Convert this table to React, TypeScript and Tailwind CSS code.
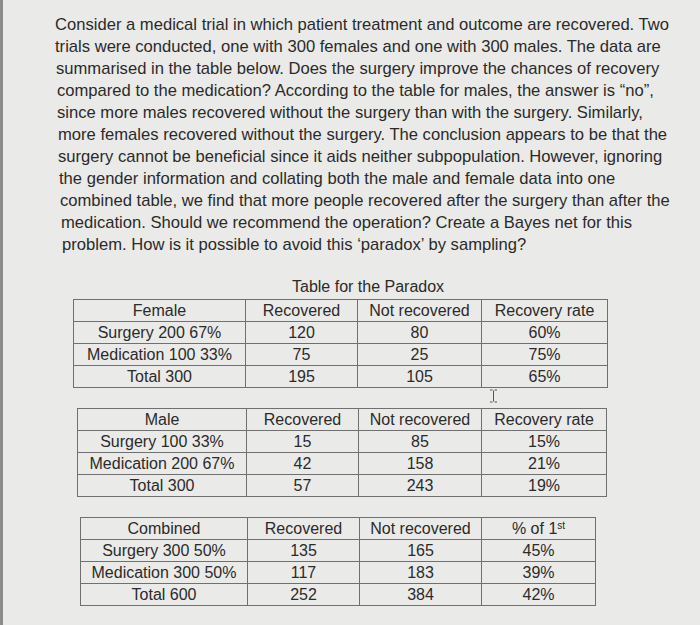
import React from 'react';

const lines = [
  'Consider a medical trial in which patient treatment and outcome are recovered. Two',
  'trials were conducted, one with 300 females and one with 300 males. The data are',
  'summarised in the table below. Does the surgery improve the chances of recovery',
  'compared to the medication? According to the table for males, the answer is \u201cno\u201d,',
  'since more males recovered without the surgery than with the surgery. Similarly,',
  'more females recovered without the surgery. The conclusion appears to be that the',
  'surgery cannot be beneficial since it aids neither subpopulation. However, ignoring',
  'the gender information and collating both the male and female data into one',
  'combined table, we find that more people recovered after the surgery than after the',
  'medication. Should we recommend the operation? Create a Bayes net for this',
  'problem. How is it possible to avoid this \u2018paradox\u2019 by sampling?',
];

// small left shifts to follow the slight tilt of the photo
const indents = ['pl-0', 'pl-0', 'pl-px', 'pl-[2px]', 'pl-[2px]', 'pl-[3px]', 'pl-[3px]', 'pl-[4px]', 'pl-[5px]', 'pl-[6px]', 'pl-[7px]'];

type Row = [string, string, string, React.ReactNode];

const Table: React.FC<{ rows: Row[]; className: string; cols: string[] }> = ({ rows, className, cols }) => (
  <table className={`table-fixed border-collapse text-[16px] leading-[21px] text-[#2b2b2b] ${className}`}>
    <colgroup>
      {cols.map((c, i) => (
        <col key={i} className={c} />
      ))}
    </colgroup>
    <tbody>
      {rows.map((r, i) => (
        <tr key={i} className="h-[21.5px]">
          {r.map((cell, j) => (
            <td key={j} className="border border-[#707070] p-0 text-center">{cell}</td>
          ))}
        </tr>
      ))}
    </tbody>
  </table>
);

export default function App() {
  return (
    <div className="relative h-[625px] w-[700px] overflow-hidden bg-[#eaeae8] font-['Liberation_Sans',Arial,sans-serif]">
      <div className="absolute left-0 top-0 h-full w-[3px] bg-[#8c8c8c]" />
      <div className="pl-[55px] pt-[14px] text-[16.6px] leading-[22px] text-[#2a2a2a]">
        {lines.map((l, i) => (
          <div key={i} className={`whitespace-nowrap ${indents[i]}`}>{l}</div>
        ))}
      </div>

      <div className="ml-[292px] mt-[21px] text-[16px] leading-[20px] text-[#2b2b2b]">Table for the Paradox</div>

      <Table
        className="ml-[73px] mt-[2px] w-[534px]"
        cols={['w-[172px]', 'w-[112px]', 'w-[124px]', 'w-[126px]']}
        rows={[
          ['Female', 'Recovered', 'Not recovered', 'Recovery rate'],
          ['Surgery 200 67%', '120', '80', '60%'],
          ['Medication 100 33%', '75', '25', '75%'],
          ['Total 300', '195', '105', '65%'],
        ]}
      />

      <Table
        className="ml-[77px] mt-[20px] w-[529px]"
        cols={['w-[169px]', 'w-[112px]', 'w-[123px]', 'w-[125px]']}
        rows={[
          ['Male', 'Recovered', 'Not recovered', 'Recovery rate'],
          ['Surgery 100 33%', '15', '85', '15%'],
          ['Medication 200 67%', '42', '158', '21%'],
          ['Total 300', '57', '243', '19%'],
        ]}
      />

      <Table
        className="ml-[80px] mt-[20px] w-[515px]"
        cols={['w-[167px]', 'w-[112px]', 'w-[122px]', 'w-[114px]']}
        rows={[
          ['Combined', 'Recovered', 'Not recovered', <span key="s">% of 1<sup className="text-[10px]">st</sup></span>],
          ['Surgery 300 50%', '135', '165', '45%'],
          ['Medication 300 50%', '117', '183', '39%'],
          ['Total 600', '252', '384', '42%'],
        ]}
      />

      {/* text cursor left in the photo */}
      <svg className="absolute left-[489px] top-[389px]" width="9" height="14" viewBox="0 0 9 14">
        <path d="M1 1h2.5M5.5 1H8M4.5 1.5v11M1 13h2.5M5.5 13H8" stroke="#555" strokeWidth="1" fill="none" />
      </svg>
    </div>
  );
}
